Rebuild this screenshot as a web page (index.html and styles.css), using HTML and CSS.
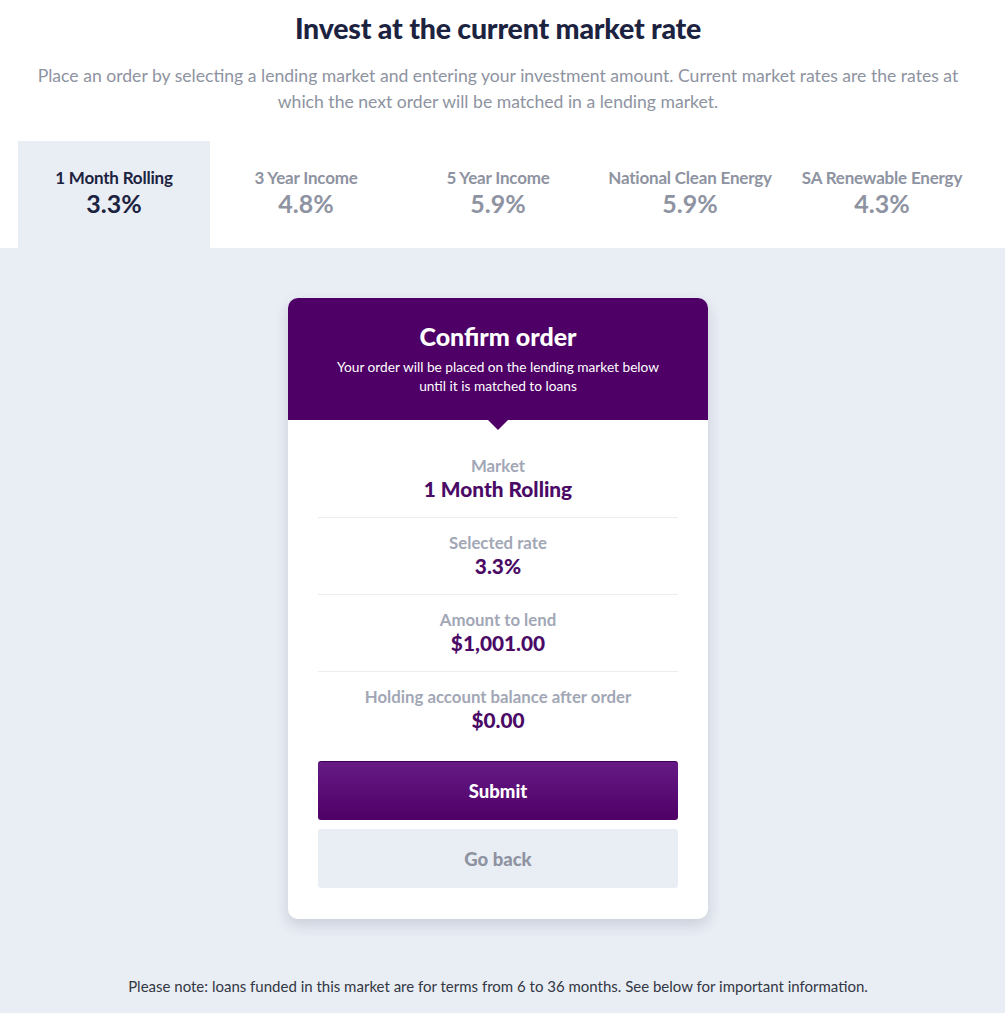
FILE: index.html
```html
<!DOCTYPE html>
<html>
<head>
<meta charset="utf-8">
<link rel="stylesheet" href="styles.css">
</head>
<body>
<div class="top">
  <h1 class="title">Invest at the current market rate</h1>
  <p class="intro">Place an order by selecting a lending market and entering your investment amount. Current market rates are the rates at which the next order will be matched in a lending market.</p>
  <div class="tabs">
    <div class="tab active"><div class="tab-name">1 Month Rolling</div><div class="tab-rate">3.3%</div></div>
    <div class="tab"><div class="tab-name">3 Year Income</div><div class="tab-rate">4.8%</div></div>
    <div class="tab"><div class="tab-name">5 Year Income</div><div class="tab-rate">5.9%</div></div>
    <div class="tab"><div class="tab-name">National Clean Energy</div><div class="tab-rate">5.9%</div></div>
    <div class="tab"><div class="tab-name">SA Renewable Energy</div><div class="tab-rate">4.3%</div></div>
  </div>
</div>
<div class="panel">
  <div class="panel-inner">
    <div class="card">
      <div class="card-head">
        <h2 class="card-title">Confirm order</h2>
        <p class="card-sub">Your order will be placed on the lending market below<br>until it is matched to loans</p>
      </div>
      <div class="card-body">
        <div class="row"><div class="label">Market</div><div class="value">1 Month Rolling</div></div>
        <div class="row"><div class="label">Selected rate</div><div class="value">3.3%</div></div>
        <div class="row"><div class="label">Amount to lend</div><div class="value">$1,001.00</div></div>
        <div class="row last"><div class="label">Holding account balance after order</div><div class="value">$0.00</div></div>
        <button class="btn btn-primary">Submit</button>
        <button class="btn btn-secondary">Go back</button>
      </div>
    </div>
    <p class="note">Please note: loans funded in this market are for terms from 6 to 36 months. See below for important information.</p>
  </div>
</div>
</body>
</html>
```
FILE: styles.css
```css
* { box-sizing: border-box; }
html, body { margin: 0; padding: 0; }
body {
  font-family: Lato, "Noto Sans", sans-serif;
  background: #ffffff;
  color: #1c2340;
}
.top {
  width: 960px;
  margin-left: 18px;
  padding-top: 11px;
}
.title {
  margin: 0;
  text-align: center;
  font-size: 28.5px;
  font-weight: 900;
  line-height: 34px;
  color: #1c2340;
  letter-spacing: -0.2px;
}
.intro {
  margin: 18px 0 0;
  text-align: center;
  font-size: 17.6px;
  line-height: 26px;
  color: #8e93a1;
  padding: 0 4px;
}
.tabs {
  display: flex;
  margin-top: 26px;
  height: 107px;
}
.tab {
  flex: 1 1 0;
  text-align: center;
  padding-top: 27px;
  color: #8e93a1;
}
.tab.active { background: #e9edf4; color: #1c2340; }
.tab-name {
  font-size: 17px;
  font-weight: 700;
  line-height: 20px;
  letter-spacing: -0.2px;
}
.tab-rate {
  font-size: 25px;
  font-weight: 700;
  line-height: 28px;
  margin-top: 1px;
}
.panel {
  background: #e9edf4;
  padding-top: 50px;
  padding-bottom: 20px;
}
.panel-inner {
  width: 960px;
  margin-left: 18px;
}
.card {
  width: 420px;
  margin: 0 auto;
  background: #ffffff;
  border-radius: 10px;
  box-shadow: 0 6px 14px rgba(40, 50, 80, 0.16);
}
.card-head {
  position: relative;
  background: #4e0066;
  border-radius: 10px 10px 0 0;
  height: 122px;
  text-align: center;
  color: #ffffff;
  padding-top: 24px;
}
.card-head::after {
  content: "";
  position: absolute;
  left: 50%;
  bottom: -10px;
  margin-left: -10px;
  border-left: 10px solid transparent;
  border-right: 10px solid transparent;
  border-top: 10px solid #4e0066;
}
.card-title {
  margin: 0;
  font-size: 25px;
  font-weight: 900;
  line-height: 28px;
}
.card-sub {
  margin: 7px 0 0;
  font-size: 13.7px;
  line-height: 19px;
}
.card-body {
  padding: 36px 30px 31px;
  display: flex;
  flex-direction: column;
}
.row {
  text-align: center;
  border-bottom: 1px solid #ebedf1;
  padding: 0 0 16px;
  margin-bottom: 15px;
}
.row.last { border-bottom: 0; margin-bottom: 0; padding-bottom: 29px; }
.label {
  font-size: 16.8px;
  font-weight: 700;
  line-height: 20px;
  color: #a2a7b6;
}
.value {
  font-size: 20.8px;
  font-weight: 900;
  line-height: 24px;
  color: #4a0a66;
  margin-top: 1px;
}
.btn {
  display: block;
  width: 100%;
  height: 59px;
  border: 0;
  border-radius: 3px;
  font-family: Lato, "Noto Sans", sans-serif;
  font-size: 18.5px;
  font-weight: 900;
  cursor: pointer;
}
.btn-primary {
  background: linear-gradient(#661a85, #4e0066);
  color: #ffffff;
  border-top: 1px solid #3d0052;
}
.btn-secondary {
  margin-top: 9px;
  background: #e9edf4;
  color: #8e93a1;
}
.note {
  margin: 58px 0 0;
  text-align: center;
  font-size: 15px;
  line-height: 18px;
  color: #333844;
}
```
